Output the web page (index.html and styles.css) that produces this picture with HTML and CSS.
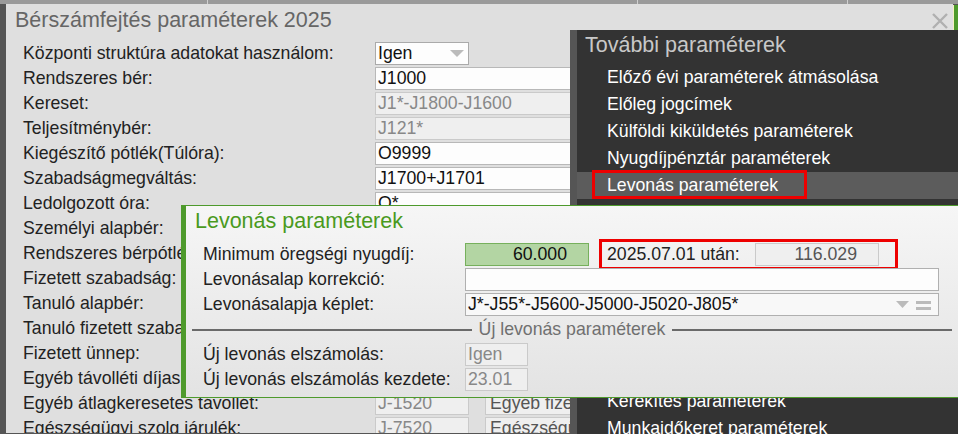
FILE: index.html
```html
<!DOCTYPE html>
<html lang="hu">
<head>
    <meta charset="UTF-8">
    <meta name="viewport" content="width=device-width, initial-scale=1.0">
    <title>Bérszámfejtés paraméterek 2025</title>
    <link rel="stylesheet" href="styles.css">
</head>
<body>
    <div class="topbar">
        <span class="tb-cell tb-a"></span>
        <span class="tb-cell tb-b"></span>
        <span class="tb-cell tb-c"></span>
        <span class="tb-cell tb-d"></span>
    </div>

    <div class="dialog">
        <div class="dialog-head">
            <h1>Bérszámfejtés paraméterek 2025</h1>
            <span class="close">
                <svg width="18" height="18" viewBox="0 0 18 18"><path d="M2 2 L16 16 M16 2 L2 16" stroke="#b0b0b0" stroke-width="2.4"/></svg>
            </span>
        </div>

        <div class="form">
            <div class="row">
                <label>Központi struktúra adatokat használom:</label>
                <div class="field select">Igen
                    <svg class="arrow" width="14" height="8" viewBox="0 0 14 8"><path d="M0 0 H14 L7 7 Z" fill="#bbb"/></svg>
                </div>
            </div>
            <div class="row"><label>Rendszeres bér:</label><div class="field wide">J1000</div></div>
            <div class="row"><label>Kereset:</label><div class="field wide disabled">J1*-J1800-J1600</div></div>
            <div class="row"><label>Teljesítménybér:</label><div class="field wide disabled">J121*</div></div>
            <div class="row"><label>Kiegészítő pótlék(Túlóra):</label><div class="field wide">O9999</div></div>
            <div class="row"><label>Szabadságmegváltás:</label><div class="field wide">J1700+J1701</div></div>
            <div class="row"><label>Ledolgozott óra:</label><div class="field wide">O*</div></div>
            <div class="row"><label>Személyi alapbér:</label><div class="field wide">J1000</div></div>
            <div class="row"><label>Rendszeres bérpótlék:</label><div class="field wide">J11*</div></div>
            <div class="row"><label>Fizetett szabadság:</label><div class="field wide">J1700</div></div>
            <div class="row"><label>Tanuló alapbér:</label><div class="field wide">J1010</div></div>
            <div class="row"><label>Tanuló fizetett szabadság:</label><div class="field wide">J1710</div></div>
            <div class="row"><label>Fizetett ünnep:</label><div class="field wide">J1750</div></div>
            <div class="row"><label>Egyéb távolléti díjas távollét:</label><div class="field short disabled">J-1510</div><div class="field note">Egyéb távollét</div></div>
            <div class="row"><label>Egyéb átlagkeresetes távollét:</label><div class="field short disabled">J-1520</div><div class="field note">Egyéb fizetett</div></div>
            <div class="row"><label>Egészségügyi szolg járulék:</label><div class="field short disabled">J-7520</div><div class="field note">Egészségügyi</div></div>
        </div>
    </div>

    <div class="green-tab"></div>

    <!-- right side menu -->
    <div class="side-panel">
        <div class="side-title">További paraméterek</div>
        <ul class="side-menu">
            <li>Előző évi paraméterek átmásolása</li>
            <li>Előleg jogcímek</li>
            <li>Külföldi kiküldetés paraméterek</li>
            <li>Nyugdíjpénztár paraméterek</li>
            <li class="selected"><span class="mark"></span>Levonás paraméterek</li>
            <li>Cafeteria paraméterek</li>
            <li>Szabadság paraméterek</li>
            <li>Táppénz paraméterek</li>
            <li>Munkaszüneti napok</li>
            <li>Jogcím paraméterek</li>
            <li>Adó paraméterek</li>
            <li>Járulék paraméterek</li>
            <li>Kerekítés paraméterek</li>
            <li>Munkaidőkeret paraméterek</li>
        </ul>
    </div>

    <!-- popup -->
    <div class="levonas">
        <div class="lev-title">Levonás paraméterek</div>
        <div class="lev-row">
            <label>Minimum öregségi nyugdíj:</label>
            <div class="field num green">60.000</div>
            <div class="highlight">
                <span class="hl-label">2025.07.01 után:</span>
                <div class="field num disabled">116.029</div>
            </div>
        </div>
        <div class="lev-row">
            <label>Levonásalap korrekció:</label>
            <div class="field full"></div>
        </div>
        <div class="lev-row">
            <label>Levonásalapja képlet:</label>
            <div class="field full formula">
                <span>J*-J55*-J5600-J5000-J5020-J805*</span>
                <svg width="40" height="12" viewBox="0 0 40 12"><path d="M0 2 H13 L6.5 9 Z" fill="#bbb"/><rect x="20" y="2" width="15" height="3" fill="#bbb"/><rect x="20" y="8" width="15" height="3" fill="#bbb"/></svg>
            </div>
        </div>
        <div class="separator">
            <span class="line"></span>
            <span class="sep-text">Új levonás paraméterek</span>
            <span class="line"></span>
        </div>
        <div class="lev-row">
            <label>Új levonás elszámolás:</label>
            <div class="field tiny disabled">Igen</div>
        </div>
        <div class="lev-row">
            <label>Új levonás elszámolás kezdete:</label>
            <div class="field tiny disabled">23.01</div>
        </div>
    </div>
</body>
</html>
```

FILE: styles.css
```css
* {
    margin: 0;
    padding: 0;
    box-sizing: border-box;
}

body {
    font-family: "Liberation Sans", Arial, sans-serif;
    font-size: 17.7px;
    background-color: #555;
    width: 958px;
    height: 434px;
    overflow: hidden;
    position: relative;
}

/* top strip of the window behind */
.topbar {
    display: flex;
    height: 5px;
    background-color: #9a9a9a;
    border-bottom: 1px solid #555;
}

.tb-cell {
    height: 100%;
    border-right: 1px solid #d0d0d0;
}

.tb-a { width: 208px; }
.tb-b { width: 430px; }
.tb-c { width: 210px; }
.tb-d { flex: 1; border-right: none; }

.dialog {
    margin-left: 6px;
    width: 947px;
    height: 429px;
    margin-top: -1px;
    background-color: #dfdfdf;
    overflow: hidden;
}

.dialog-head {
    display: flex;
    justify-content: space-between;
    align-items: center;
    height: 26px;
    padding: 6px 4px 0 9px;
}

.dialog-head h1 {
    font-size: 21.5px;
    font-weight: normal;
    color: #666;
}

.close {
    display: flex;
    margin-top: 1px;
}

.form {
    padding: 11px 0 0 17px;
}

.row {
    display: flex;
    align-items: center;
    height: 25px;
}

.row label {
    width: 352px;
    color: #222;
    white-space: nowrap;
}

.field {
    height: 23px;
    line-height: 21px;
    padding-left: 2px;
    border: 1px solid #b8b8b8;
    background-color: #fdfdfd;
    color: #111;
    white-space: nowrap;
    overflow: hidden;
    flex-shrink: 0;
}

.field.disabled {
    background-color: #efefef;
    border-color: #cacaca;
    color: #888;
}

.select {
    width: 94px;
    display: flex;
    justify-content: space-between;
    align-items: center;
    padding-right: 4px;
    border-color: #aaa;
}

.wide { width: 230px; }
.short { width: 94px; }

.field.note {
    width: 110px;
    margin-left: 16px;
    padding-left: 4px;
    background-color: #efefef;
    border-color: #cacaca;
    color: #555;
}

.green-tab {
    position: absolute;
    top: 5px;
    right: 0;
    width: 5px;
    height: 25px;
    background-color: #4e9a2c;
    border-left: 1px solid #f4f0c0;
}

/* right side menu */
.side-panel {
    position: absolute;
    left: 570px;
    top: 30px;
    right: 0;
    bottom: 0;
    background-color: #333;
    border-left: 7px solid #555;
}

.side-title {
    height: 34px;
    line-height: 31px;
    padding-left: 8px;
    font-size: 21.5px;
    color: #c8c8c8;
}

.side-menu {
    list-style: none;
}

.side-menu li {
    position: relative;
    height: 27px;
    line-height: 27px;
    padding-left: 30px;
    color: #fff;
    white-space: nowrap;
}

.side-menu li.selected {
    background-color: #5c5c5c;
}

.mark {
    position: absolute;
    left: 15px;
    top: -2px;
    width: 215px;
    height: 29px;
    border: 3px solid #ee0000;
}

/* popup */
.levonas {
    position: absolute;
    left: 181px;
    top: 205px;
    right: 0;
    height: 193px;
    border-left: 5px solid #4e9a2c;
    border-top: 1px solid #4e9a2c;
    border-bottom: 1px solid #4e9a2c;
    background: linear-gradient(#f6f6f6, #e3e3e3);
}

.lev-title {
    height: 30px;
    line-height: 31px;
    margin-bottom: 6px;
    padding-left: 9px;
    font-size: 21.5px;
    color: #4a9a1e;
}

.lev-row {
    display: flex;
    align-items: center;
    height: 25px;
    padding-left: 17px;
}

.lev-row label {
    width: 262px;
    color: #222;
    white-space: nowrap;
}

.num {
    width: 124px;
    text-align: right;
    padding-right: 21px;
}

.field.green {
    background-color: #b3d5a3;
    border-color: #76b05c;
    color: #111;
}

.highlight {
    display: flex;
    align-items: center;
    margin-left: 10px;
    padding: 1px 16px 1px 5px;
    border: 3px solid #ee0000;
}

.hl-label {
    width: 148px;
    color: #222;
}

.highlight .field {
    color: #555;
}

.full {
    width: 474px;
    border-color: #b0b0b0;
}

.formula {
    display: flex;
    justify-content: space-between;
    align-items: center;
    background-color: #f8f8f8;
    padding-right: 2px;
    color: #111;
}

.separator {
    display: flex;
    align-items: center;
    gap: 7px;
    height: 25px;
    padding: 0 6px;
}

.separator .line {
    flex: 1;
    height: 2px;
    background-color: #6a6a6a;
}

.sep-text {
    color: #707070;
}

.tiny {
    width: 63px;
}
```
